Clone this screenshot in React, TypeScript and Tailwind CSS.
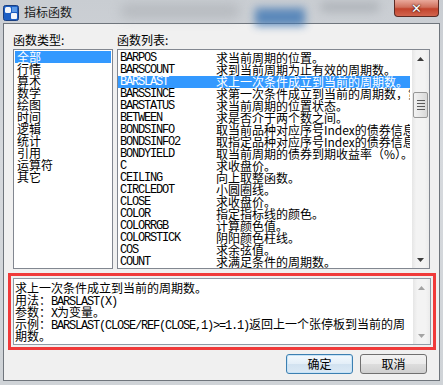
import React from "react";

const cjk = "font-['Noto_Sans_CJK_SC',sans-serif]";
const mono = "font-['Liberation_Mono','Noto_Sans_CJK_SC',monospace] text-[12px] tracking-[-1.2px]";

const categories = ["全部", "行情", "算术", "数学", "绘图", "时间", "逻辑", "统计", "引用", "运算符", "其它"];

const funcs: [string, string][] = [
  ["BARPOS", "求当前周期的位置。"],
  ["BARSCOUNT", "求到当前周期为止有效的周期数。"],
  ["BARSLAST", "求上一次条件成立到当前的周期数。"],
  ["BARSSINCE", "求第一次条件成立到当前的周期数，第一个"],
  ["BARSTATUS", "求当前周期的位置状态。"],
  ["BETWEEN", "求是否介于两个数之间。"],
  ["BONDSINFO", "取当前品种对应序号Index的债券信息"],
  ["BONDSINFO2", "取指定品种对应序号Index的债券信息"],
  ["BONDYIELD", "取当前周期的债券到期收益率（%）。"],
  ["C", "求收盘价。"],
  ["CEILING", "向上取整函数。"],
  ["CIRCLEDOT", "小圆圈线。"],
  ["CLOSE", "求收盘价。"],
  ["COLOR", "指定指标线的颜色。"],
  ["COLORRGB", "计算颜色值。"],
  ["COLORSTICK", "阴阳颜色柱线。"],
  ["COS", "求余弦值。"],
  ["COUNT", "求满足条件的周期数。"],
  ["CROSS", "判断是否交叉。"],
];

const Arrow = ({ up, color }: { up?: boolean; color: string }) => (
  <svg width="7" height="4" viewBox="0 0 7 4">
    <path d={up ? "M0 4 L3.5 0 L7 4 Z" : "M0 0 L7 0 L3.5 4 Z"} fill={color} />
  </svg>
);

const ScrollBar = ({ thumb, disabled }: { thumb?: boolean; disabled?: boolean }) => {
  const c = disabled ? "#a3a3a3" : "#3c3c3c";
  return (
    <div className="flex w-[17px] shrink-0 flex-col bg-[linear-gradient(90deg,#e6e6e6,#f3f3f3_25%,#f3f3f3_75%,#ebebeb)]">
      <div className="flex h-[17px] items-center justify-center">
        <Arrow up color={c} />
      </div>
      <div className="flex-1">
        {thumb && (
          <div className="mx-[1px] mt-[25px] flex h-[26px] flex-col items-center justify-center gap-[2px] rounded-[2px] border border-[#979797] bg-[linear-gradient(90deg,#f2f2f2,#e6e6e6_50%,#d8d8d8)]">
            <div className="h-px w-[8px] bg-[#5b5b5b]" />
            <div className="h-px w-[8px] bg-[#5b5b5b]" />
            <div className="h-px w-[8px] bg-[#5b5b5b]" />
            <div className="h-px w-[8px] bg-[#5b5b5b]" />
          </div>
        )}
      </div>
      <div className="flex h-[17px] items-center justify-center">
        <Arrow color={c} />
      </div>
    </div>
  );
};

const Mono = ({ children }: { children: React.ReactNode }) => <span className={mono}>{children}</span>;

export default function App() {
  return (
    <div className={`relative h-[385px] w-[443px] overflow-hidden bg-[linear-gradient(180deg,#c9cdd2,#d6d9dd_40%,#cfd3d7)] ${cjk} text-[12px] leading-[12px] text-black`}>
      {/* blurred glass backdrop */}
      <div className="absolute left-[120px] top-[4px] h-[14px] w-[120px] rounded-full bg-[#a9adb2] opacity-60 blur-[6px]" />
      <div className="absolute left-[255px] top-[8px] h-[18px] w-[50px] bg-[#3f77b4] opacity-80 blur-[4px]" />
      <div className="absolute left-[320px] top-[2px] h-[10px] w-[60px] rounded-full bg-[#9ea3a9] opacity-60 blur-[5px]" />

      {/* title bar */}
      <div className="relative flex h-[23px] items-center pl-[3px]">
        <svg width="16" height="16" viewBox="0 0 16 16" className="mt-[2px]">
          <rect x="0.5" y="0.5" width="15" height="15" rx="2" fill="#1d5fc4" stroke="#1a3f80" />
          <rect x="2" y="2" width="6" height="6" rx="1.5" fill="#f4f7fb" />
          <rect x="8" y="8" width="6" height="6" rx="1" fill="#f4f7fb" />
          <rect x="9" y="2" width="5" height="5" fill="#5d9ae6" />
        </svg>
        <span className="ml-[5px] mt-[1px] text-[12px] text-[#1a1a1a]">指标函数</span>
        <div className="absolute right-[4px] top-0 flex h-[17px] w-[45px] items-center justify-center rounded-b-[4px] border border-t-0 border-[#5c2b24] bg-[linear-gradient(180deg,#e9a99b,#d0705c_45%,#c2432c_55%,#d2654e)]">
          <span className="font-['DejaVu_Sans',sans-serif] text-[13px] font-bold leading-[13px] text-white [text-shadow:0_0_2px_#3a1410,0_0_1px_#3a1410]">✕</span>
        </div>
      </div>

      {/* client area */}
      <div className="mx-[3px] flex h-[358px] flex-col border border-[#6f757c] bg-[#f0f0f0]">
        <div className="flex gap-[4px] pl-[9px] pt-[10px]">
          {/* categories */}
          <div className="flex w-[100px] flex-col">
            <span className="h-[15px]">函数类型:</span>
            <div className="flex h-[220px] flex-col border border-[#828790] bg-white p-px">
              {categories.map((c, i) => (
                <div key={c} className={`h-[12px] pl-[2px] ${i === 0 ? "bg-[#3399ff] text-white" : ""}`}>
                  {c}
                </div>
              ))}
            </div>
          </div>

          {/* function list */}
          <div className="flex w-[313px] flex-col">
            <span className="h-[15px]">函数列表:</span>
            <div className="flex h-[220px] border border-[#828790] bg-white">
              <div className="flex min-w-0 flex-1 flex-col overflow-hidden pr-[2px] pt-[2px]">
                {funcs.map(([name, desc], i) => (
                  <div
                    key={name}
                    className={`flex h-[12px] shrink-0 whitespace-nowrap pl-[2px] ${i === 2 ? "bg-[#3399ff] text-white" : ""}`}
                  >
                    <span className={`w-[96px] shrink-0 ${mono}`}>{name}</span>
                    <span className="overflow-hidden">{desc}</span>
                  </div>
                ))}
              </div>
              <ScrollBar thumb />
            </div>
          </div>
        </div>

        {/* description box */}
        <div className="ml-[4px] mt-[4px] h-[77px] w-[428px] border-[3px] border-[#f03a3a] p-[2px]">
          <div className="flex h-full border border-[#8e9aa6] bg-white">
            <div className="flex-1 pl-px pt-[3px]">
              <div className="h-[12px]">求上一次条件成立到当前的周期数。</div>
              <div className="h-[12px]">
                用法：<Mono>BARSLAST(X)</Mono>
              </div>
              <div className="h-[12px]">
                参数：<Mono>X</Mono>为变量。
              </div>
              <div className="h-[12px] whitespace-nowrap">
                示例：<Mono>BARSLAST(CLOSE/REF(CLOSE,1)&gt;=1.1)</Mono>返回上一个张停板到当前的周
              </div>
              <div className="h-[12px]">期数。</div>
            </div>
            <ScrollBar disabled />
          </div>
        </div>

        {/* buttons */}
        <div className="flex justify-end gap-[7px] pr-[12px] pt-[4px]">
          <button className="flex h-[20px] w-[67px] items-center justify-center rounded-[3px] border border-[#3c7fb1] bg-[linear-gradient(180deg,#f4f9fd,#e3eef8_50%,#d2e2f0_51%,#dbe9f5)] shadow-[inset_0_0_0_1px_#c7e3f7] text-[12px]">
            确定
          </button>
          <button className="flex h-[20px] w-[67px] items-center justify-center rounded-[3px] border border-[#707070] bg-[linear-gradient(180deg,#f2f2f2,#ebebeb_50%,#dddddd_51%,#cfcfcf)] text-[12px]">
            取消
          </button>
        </div>
      </div>
    </div>
  );
}
